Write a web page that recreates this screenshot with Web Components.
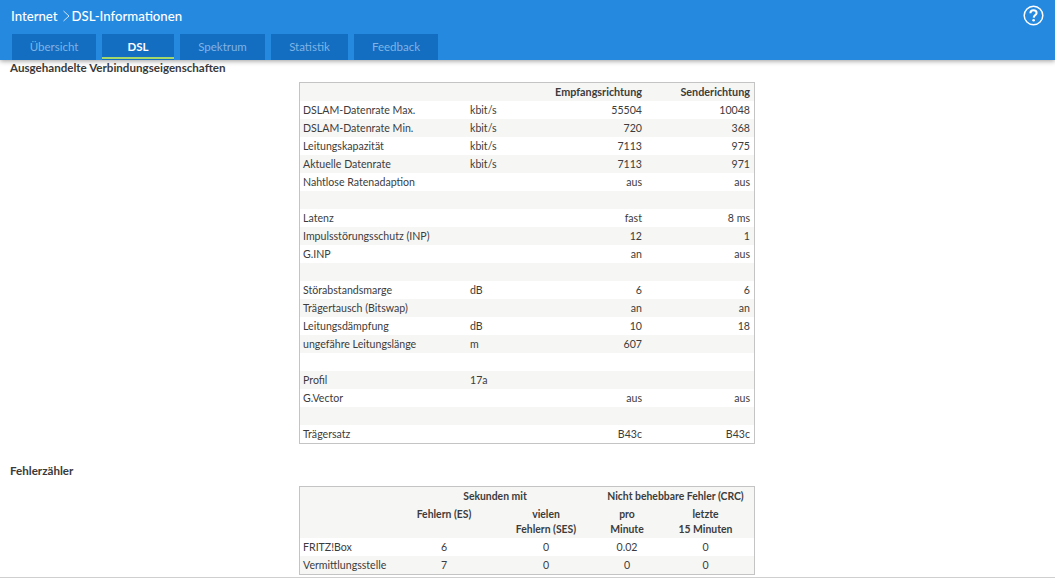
<!DOCTYPE html>
<html>
<head>
<meta charset="utf-8">
<title>DSL-Informationen</title>
<style>
html, body { margin: 0; height: 100%; overflow: hidden; background: #fff; }
body { font-family: Lato, "Noto Sans", sans-serif; font-size: 10.6px; color: #3c3c3c; }
</style>
</head>
<body>
<template id="tpl-header">
  <style>
    :host { display: block; height: 60px; background: #2589df; box-shadow: 0 1px 5px rgba(0,0,0,.4); position: relative; }
    .top { display: flex; justify-content: space-between; height: 34px; padding: 0 11px 0 11px; }
    .title { color: #fff; font-size: 13.2px; font-weight: 500; height: 32px; display: flex; align-items: center; }
    .title svg { margin: 0 2px 0 4px; }
    .help { margin-top: 5px; width: 21px; height: 21px; }
    nav { display: flex; gap: 6px; padding-left: 12px; }
  </style>
  <div class="top">
    <div class="title"><span>Internet</span><svg width="8" height="12" viewBox="0 0 8 12"><path d="M1.5 1 L7 6 L1.5 11" fill="none" stroke="#cfe4f8" stroke-width="1"/></svg><span>DSL-Informationen</span></div>
    <svg class="help" viewBox="0 0 21 21"><circle cx="10.5" cy="10.5" r="9.3" fill="none" stroke="#fff" stroke-width="1.5"/><path d="M7.4 8.2 C7.4 6.3 8.8 5.3 10.5 5.3 C12.3 5.3 13.6 6.4 13.6 8 C13.6 9.9 11 10.2 10.7 12.6" fill="none" stroke="#fff" stroke-width="2"/><circle cx="10.6" cy="15.2" r="1.3" fill="#fff"/></svg>
  </div>
  <nav><slot></slot></nav>
</template>

<template id="tpl-tab">
  <style>
    :host { display: block; box-sizing: border-box; height: 26px; background: #136dc0; color: #7fb4e6; font-size: 11.5px; line-height: 25px; text-align: center; }
    :host([active]) { color: #fff; font-weight: 700; }
    :host([active]) .bar { background: #a5d86a; }
    .bar { height: 2px; margin-top: -1px; }
    .txt { display: block; height: 24px; }
  </style>
  <span class="txt"><slot></slot></span>
  <div class="bar"></div>
</template>

<template id="tpl-title">
  <style>
    :host { display: block; font-weight: 700; font-size: 11.6px; line-height: 16px; color: #3a3a3a; padding-left: 10px; }
  </style>
  <slot></slot>
</template>

<template id="tpl-table">
  <style>
    :host { display: block; box-sizing: border-box; width: 456px; margin-left: 299px; border: 1px solid #c4c4c4; background: #fff; }
  </style>
  <slot></slot>
</template>

<template id="tpl-row">
  <style>
    :host { display: grid; grid-template-columns: var(--cols); padding: var(--pad, 0 4px 0 3px); height: 18px; line-height: 18px; white-space: nowrap; }
    :host(:nth-child(odd)) { background: #f6f6f5; }
    :host([head]) { font-weight: 700; font-size: var(--head-size, 10.8px); background: #f6f6f5; }
    ::slotted(.r) { text-align: right; }
    ::slotted(.c) { text-align: center; }
    ::slotted(.s2) { grid-column: span 2; }
  </style>
  <slot></slot>
</template>

<template id="tpl-rule">
  <style>
    :host { display: block; height: 1px; background: #cfcfcf; margin-top: 2px; }
  </style>
</template>

<script>
class SimpleEl extends HTMLElement {
  connectedCallback() {
    if (this.shadowRoot) return;
    this.attachShadow({ mode: "open" });
    this.shadowRoot.appendChild(document.getElementById(this.constructor.tpl).content.cloneNode(true));
  }
}
class BoxHeader extends SimpleEl {}
BoxHeader.tpl = "tpl-header";
class BoxTab extends SimpleEl {}
BoxTab.tpl = "tpl-tab";
class SectionTitle extends SimpleEl {}
SectionTitle.tpl = "tpl-title";
class InfoTable extends SimpleEl {}
InfoTable.tpl = "tpl-table";
class InfoRow extends SimpleEl {}
InfoRow.tpl = "tpl-row";
class PageRule extends SimpleEl {}
PageRule.tpl = "tpl-rule";
customElements.define("box-header", BoxHeader);
customElements.define("box-tab", BoxTab);
customElements.define("section-title", SectionTitle);
customElements.define("info-table", InfoTable);
customElements.define("info-row", InfoRow);
customElements.define("page-rule", PageRule);
</script>

<box-header>
  <box-tab style="width:84px">Übersicht</box-tab>
  <box-tab style="width:72px" active>DSL</box-tab>
  <box-tab style="width:85px">Spektrum</box-tab>
  <box-tab style="width:77px">Statistik</box-tab>
  <box-tab style="width:84px">Feedback</box-tab>
</box-header>

<section-title>Ausgehandelte Verbindungseigenschaften</section-title>

<info-table style="--cols:167px 60px 112px 108px;margin-top:6px">
  <info-row head><span></span><span></span><span class="r">Empfangsrichtung</span><span class="r">Senderichtung</span></info-row>
  <info-row><span>DSLAM-Datenrate Max.</span><span>kbit/s</span><span class="r">55504</span><span class="r">10048</span></info-row>
  <info-row><span>DSLAM-Datenrate Min.</span><span>kbit/s</span><span class="r">720</span><span class="r">368</span></info-row>
  <info-row><span>Leitungskapazität</span><span>kbit/s</span><span class="r">7113</span><span class="r">975</span></info-row>
  <info-row><span>Aktuelle Datenrate</span><span>kbit/s</span><span class="r">7113</span><span class="r">971</span></info-row>
  <info-row><span>Nahtlose Ratenadaption</span><span></span><span class="r">aus</span><span class="r">aus</span></info-row>
  <info-row></info-row>
  <info-row><span>Latenz</span><span></span><span class="r">fast</span><span class="r">8 ms</span></info-row>
  <info-row><span>Impulsstörungsschutz (INP)</span><span></span><span class="r">12</span><span class="r">1</span></info-row>
  <info-row><span>G.INP</span><span></span><span class="r">an</span><span class="r">aus</span></info-row>
  <info-row></info-row>
  <info-row><span>Störabstandsmarge</span><span>dB</span><span class="r">6</span><span class="r">6</span></info-row>
  <info-row><span>Trägertausch (Bitswap)</span><span></span><span class="r">an</span><span class="r">an</span></info-row>
  <info-row><span>Leitungsdämpfung</span><span>dB</span><span class="r">10</span><span class="r">18</span></info-row>
  <info-row><span>ungefähre Leitungslänge</span><span>m</span><span class="r">607</span><span></span></info-row>
  <info-row></info-row>
  <info-row><span>Profil</span><span>17a</span><span></span><span></span></info-row>
  <info-row><span>G.Vector</span><span></span><span class="r">aus</span><span class="r">aus</span></info-row>
  <info-row></info-row>
  <info-row><span>Trägersatz</span><span></span><span class="r">B43c</span><span class="r">B43c</span></info-row>
</info-table>

<section-title style="margin-top:19px">Fehlerzähler</section-title>

<info-table style="--cols:90px 102px 102px 60px 97px;--pad:0 0 0 3px;--head-size:10.4px;margin-top:7px">
  <info-row head><span></span><span class="c s2">Sekunden mit</span><span class="c s2">Nicht behebbare Fehler (CRC)</span></info-row>
  <info-row head style="height:33px;line-height:15px;padding-top:2px;box-sizing:border-box"><span></span><span class="c">Fehlern (ES)</span><span class="c">vielen<br>Fehlern (SES)</span><span class="c">pro<br>Minute</span><span class="c">letzte<br>15 Minuten</span></info-row>
  <info-row style="background:#fff"><span>FRITZ!Box</span><span class="c">6</span><span class="c">0</span><span class="c">0.02</span><span class="c">0</span></info-row>
  <info-row style="background:#f6f6f5"><span>Vermittlungsstelle</span><span class="c">7</span><span class="c">0</span><span class="c">0</span><span class="c">0</span></info-row>
</info-table>
<page-rule></page-rule>
</body>
</html>
